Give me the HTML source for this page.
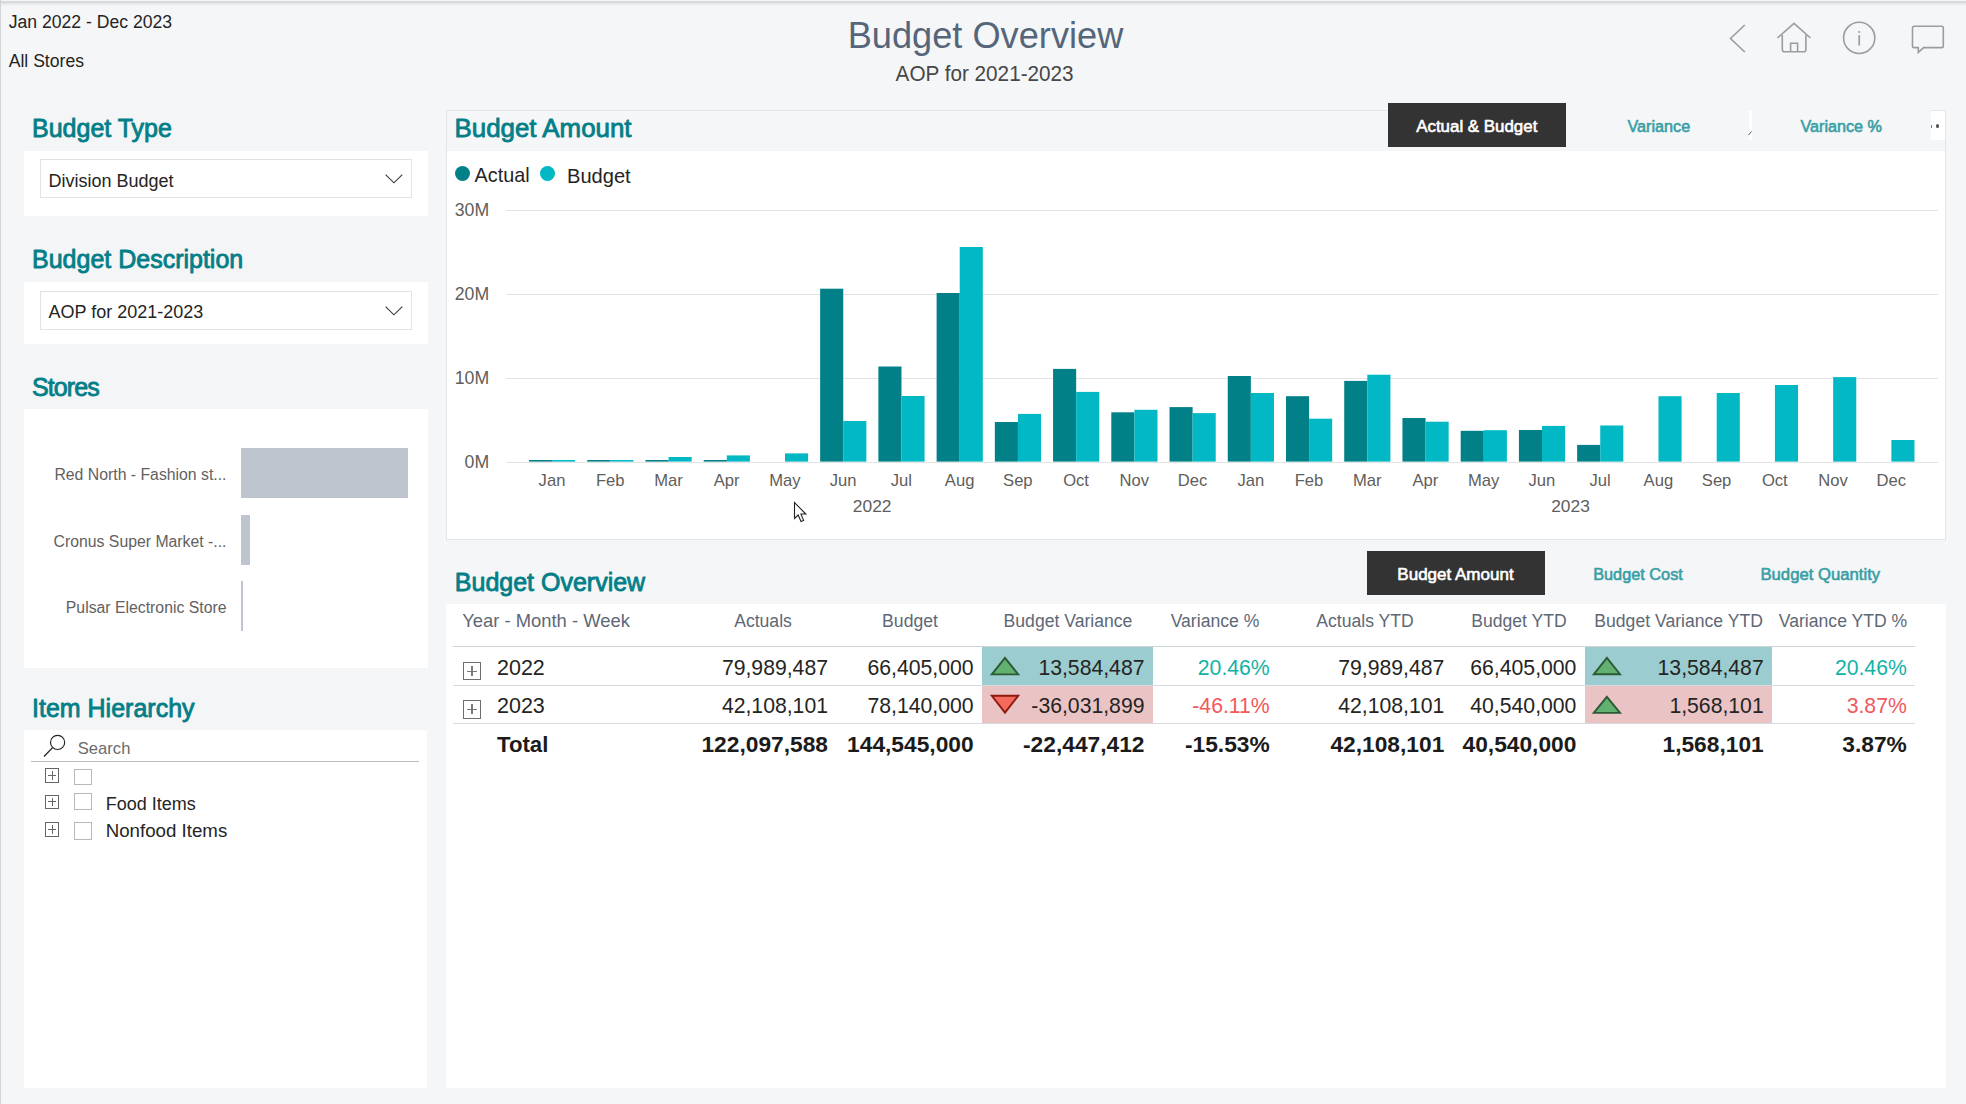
<!DOCTYPE html><html><head><meta charset="utf-8"><style>
html,body{margin:0;padding:0;width:1966px;height:1104px;overflow:hidden;background:#F5F6F8;font-family:"Liberation Sans", sans-serif;}
body{position:relative;}
svg text{font-family:"Liberation Sans", sans-serif;}
</style></head><body>
<div style="position:absolute;left:0;top:0;width:1966px;height:7px;background:linear-gradient(#F8F8F9 0px,#F3F3F4 1px,#D3D4D6 1.6px,#DFE0E2 3px,#ECEDEF 4.5px,#F5F6F8 6.5px);"></div>
<div style="position:absolute;left:0.00px;top:0.00px;width:1.20px;height:1104.00px;background:#D2D4D6;"></div>
<svg style="position:absolute;left:0;top:0;overflow:visible" width="1" height="1"><text x="8.70" y="27.90" font-size="17.6" font-weight="400" fill="#252423" text-anchor="start" style="white-space:pre">Jan 2022 - Dec 2023</text></svg>
<svg style="position:absolute;left:0;top:0;overflow:visible" width="1" height="1"><text x="8.70" y="66.80" font-size="17.6" font-weight="400" fill="#252423" text-anchor="start" style="white-space:pre">All Stores</text></svg>
<svg style="position:absolute;left:0;top:0;overflow:visible" width="1" height="1"><text x="985.50" y="48.00" font-size="37.6" font-weight="400" fill="#55657A" text-anchor="middle" textLength="275.66" lengthAdjust="spacingAndGlyphs" style="white-space:pre">Budget Overview</text></svg>
<svg style="position:absolute;left:0;top:0;overflow:visible" width="1" height="1"><text x="984.60" y="80.80" font-size="22" font-weight="400" fill="#474747" text-anchor="middle" textLength="178.00" lengthAdjust="spacingAndGlyphs" style="white-space:pre">AOP for 2021-2023</text></svg>
<svg style="position:absolute;left:0;top:0" width="1966" height="110" viewBox="0 0 1966 110">
<g fill="none" stroke="#9A9DA0" stroke-width="1.6" stroke-linecap="butt" stroke-linejoin="miter">
<polyline points="1744.8,25 1730.5,38.5 1744.8,52"/>
<polyline points="1777.5,38 1794,23.3 1810.5,38"/>
<path d="M1782.3,35 V49.5 Q1782.3,51.8 1784.6,51.8 H1803.6 Q1805.9,51.8 1805.9,49.5 V35"/>
<polyline points="1790.6,51.8 1790.6,43.2 1797.6,43.2 1797.6,51.8"/>
<circle cx="1859.2" cy="37.9" r="15.6"/>
<line x1="1859.2" y1="35.2" x2="1859.2" y2="45.6" stroke-width="1.7"/>
<path d="M1914.2,26.2 H1941.6 Q1943.3,26.2 1943.3,27.9 V45.9 Q1943.3,47.6 1941.6,47.6 H1923.6 L1918.3,52.4 L1918.3,47.6 H1914.2 Q1912.5,47.6 1912.5,45.9 V27.9 Q1912.5,26.2 1914.2,26.2 Z"/>
</g>
<circle cx="1859.2" cy="32" r="1.1" fill="#9A9DA0"/>
</svg>
<div style="position:absolute;left:23.50px;top:109.00px;width:403.50px;height:41.50px;background:#F4F5F7;"></div>
<div style="position:absolute;left:23.50px;top:150.50px;width:404.50px;height:65.00px;background:#FFFFFF;"></div>
<svg style="position:absolute;left:0;top:0;overflow:visible" width="1" height="1"><text x="32.00" y="137.10" font-size="25" font-weight="400" fill="#047F88" text-anchor="start" stroke="#047F88" stroke-width="0.85" stroke-linejoin="round" style="white-space:pre">Budget Type</text></svg>
<div style="position:absolute;left:39.50px;top:158.60px;width:372.50px;height:39.70px;background:#FFFFFF;box-sizing:border-box;border:1px solid #E3E3E3;"></div>
<svg style="position:absolute;left:0;top:0;overflow:visible" width="1" height="1"><text x="48.50" y="187.20" font-size="18" font-weight="400" fill="#252423" text-anchor="start" style="white-space:pre">Division Budget</text></svg>
<svg style="position:absolute;left:383px;top:171.4px" width="22" height="14" viewBox="0 0 22 14"><polyline points="2.6,3.6 10.9,11.8 19.3,3.6" fill="none" stroke="#3A3A3A" stroke-width="1.15"/></svg>
<div style="position:absolute;left:23.50px;top:241.70px;width:403.50px;height:40.10px;background:#F4F5F7;"></div>
<div style="position:absolute;left:23.50px;top:281.80px;width:404.50px;height:61.80px;background:#FFFFFF;"></div>
<svg style="position:absolute;left:0;top:0;overflow:visible" width="1" height="1"><text x="32.00" y="268.00" font-size="25" font-weight="400" fill="#047F88" text-anchor="start" stroke="#047F88" stroke-width="0.85" stroke-linejoin="round" style="white-space:pre">Budget Description</text></svg>
<div style="position:absolute;left:39.50px;top:290.50px;width:372.50px;height:39.50px;background:#FFFFFF;box-sizing:border-box;border:1px solid #E3E3E3;"></div>
<svg style="position:absolute;left:0;top:0;overflow:visible" width="1" height="1"><text x="48.50" y="318.00" font-size="18" font-weight="400" fill="#252423" text-anchor="start" style="white-space:pre">AOP for 2021-2023</text></svg>
<svg style="position:absolute;left:383px;top:303.2px" width="22" height="14" viewBox="0 0 22 14"><polyline points="2.6,3.6 10.9,11.8 19.3,3.6" fill="none" stroke="#3A3A3A" stroke-width="1.15"/></svg>
<div style="position:absolute;left:23.50px;top:368.70px;width:403.50px;height:40.30px;background:#F4F5F7;"></div>
<div style="position:absolute;left:23.50px;top:409.00px;width:404.50px;height:259.00px;background:#FFFFFF;"></div>
<svg style="position:absolute;left:0;top:0;overflow:visible" width="1" height="1"><text x="32.00" y="395.70" font-size="25" font-weight="400" fill="#047F88" text-anchor="start" stroke="#047F88" stroke-width="0.85" stroke-linejoin="round" style="white-space:pre"><tspan letter-spacing="-0.9">Stores</tspan></text></svg>
<svg style="position:absolute;left:0;top:0;overflow:visible" width="1" height="1"><text x="226.50" y="479.90" font-size="15.8" font-weight="400" fill="#63615F" text-anchor="end" style="white-space:pre">Red North - Fashion st...</text></svg>
<svg style="position:absolute;left:0;top:0;overflow:visible" width="1" height="1"><text x="226.50" y="546.70" font-size="15.8" font-weight="400" fill="#63615F" text-anchor="end" style="white-space:pre">Cronus Super Market -...</text></svg>
<svg style="position:absolute;left:0;top:0;overflow:visible" width="1" height="1"><text x="226.50" y="613.00" font-size="15.8" font-weight="400" fill="#63615F" text-anchor="end" style="white-space:pre">Pulsar Electronic Store</text></svg>
<div style="position:absolute;left:241.00px;top:447.80px;width:166.80px;height:50.40px;background:#BFC5CE;"></div>
<div style="position:absolute;left:241.00px;top:514.70px;width:8.90px;height:50.30px;background:#BFC5CE;"></div>
<div style="position:absolute;left:241.00px;top:581.00px;width:2.00px;height:50.40px;background:#BFC5CE;"></div>
<div style="position:absolute;left:23.50px;top:689.00px;width:402.00px;height:41.40px;background:#F4F5F7;"></div>
<div style="position:absolute;left:23.50px;top:730.40px;width:403.00px;height:357.60px;background:#FFFFFF;"></div>
<svg style="position:absolute;left:0;top:0;overflow:visible" width="1" height="1"><text x="32.00" y="716.70" font-size="25" font-weight="400" fill="#047F88" text-anchor="start" stroke="#047F88" stroke-width="0.85" stroke-linejoin="round" style="white-space:pre">Item Hierarchy</text></svg>
<svg style="position:absolute;left:40px;top:732px" width="30" height="30" viewBox="0 0 30 30">
<circle cx="17.6" cy="10.4" r="7.1" fill="none" stroke="#222" stroke-width="1.15"/>
<line x1="12.6" y1="15.6" x2="4" y2="24.5" stroke="#222" stroke-width="1.3"/></svg>
<svg style="position:absolute;left:0;top:0;overflow:visible" width="1" height="1"><text x="77.80" y="753.70" font-size="16.6" font-weight="400" fill="#6B6B6B" text-anchor="start" style="white-space:pre">Search</text></svg>
<div style="position:absolute;left:31.00px;top:760.80px;width:387.80px;height:1.20px;background:#BDBDBD;"></div>
<div style="position:absolute;left:44.6px;top:768.0px;width:14.9px;height:15.0px;box-sizing:border-box;border:1.3px solid #666;"></div>
<div style="position:absolute;left:47.85px;top:775.00px;width:8.40px;height:1.00px;background:#666;"></div>
<div style="position:absolute;left:51.55px;top:771.30px;width:1.00px;height:8.40px;background:#666;"></div>
<div style="position:absolute;left:74.4px;top:768.6px;width:17.8px;height:16.7px;box-sizing:border-box;border:1.2px solid #B8B8B8;background:#fff;"></div>
<div style="position:absolute;left:44.6px;top:794.5px;width:14.9px;height:14.5px;box-sizing:border-box;border:1.3px solid #666;"></div>
<div style="position:absolute;left:47.85px;top:801.25px;width:8.40px;height:1.00px;background:#666;"></div>
<div style="position:absolute;left:51.55px;top:797.55px;width:1.00px;height:8.40px;background:#666;"></div>
<div style="position:absolute;left:74.4px;top:793.3px;width:17.8px;height:17.2px;box-sizing:border-box;border:1.2px solid #B8B8B8;background:#fff;"></div>
<svg style="position:absolute;left:0;top:0;overflow:visible" width="1" height="1"><text x="105.70" y="809.80" font-size="18" font-weight="400" fill="#252423" text-anchor="start" style="white-space:pre">Food Items</text></svg>
<div style="position:absolute;left:44.6px;top:822.4px;width:14.9px;height:14.4px;box-sizing:border-box;border:1.3px solid #666;"></div>
<div style="position:absolute;left:47.85px;top:829.10px;width:8.40px;height:1.00px;background:#666;"></div>
<div style="position:absolute;left:51.55px;top:825.40px;width:1.00px;height:8.40px;background:#666;"></div>
<div style="position:absolute;left:74.4px;top:822.0px;width:17.8px;height:18.0px;box-sizing:border-box;border:1.2px solid #B8B8B8;background:#fff;"></div>
<svg style="position:absolute;left:0;top:0;overflow:visible" width="1" height="1"><text x="105.70" y="836.80" font-size="18.7" font-weight="400" fill="#252423" text-anchor="start" style="white-space:pre">Nonfood Items</text></svg>
<div style="position:absolute;left:446px;top:110px;width:1500px;height:429.5px;box-sizing:border-box;border:1px solid #E4E5E7;background:#F5F6F8;"></div>
<div style="position:absolute;left:447.00px;top:150.50px;width:1498.00px;height:388.00px;background:#FFFFFF;"></div>
<svg style="position:absolute;left:0;top:0;overflow:visible" width="1" height="1"><text x="454.50" y="137.00" font-size="25.9" font-weight="400" fill="#047F88" text-anchor="start" stroke="#047F88" stroke-width="0.85" stroke-linejoin="round" style="white-space:pre">Budget Amount</text></svg>
<div style="position:absolute;left:1566.00px;top:103.00px;width:365.00px;height:45.00px;background:#F5F6F8;"></div>
<div style="position:absolute;left:1749.30px;top:110.90px;width:2.40px;height:28.70px;background:#FFFFFF;"></div>
<svg style="position:absolute;left:1747px;top:129px" width="6" height="8"><line x1="1.5" y1="6" x2="4.5" y2="2.5" stroke="#555" stroke-width="1"/></svg>
<div style="position:absolute;left:1387.60px;top:103.00px;width:178.40px;height:44.30px;background:#333333;"></div>
<svg style="position:absolute;left:0;top:0;overflow:visible" width="1" height="1"><text x="1476.80" y="132.40" font-size="16.9" font-weight="400" fill="#FFFFFF" text-anchor="middle" stroke="#FFFFFF" stroke-width="0.6" stroke-linejoin="round" style="white-space:pre">Actual &amp; Budget</text></svg>
<svg style="position:absolute;left:0;top:0;overflow:visible" width="1" height="1"><text x="1658.80" y="131.60" font-size="16.2" font-weight="400" fill="#3A9EA5" text-anchor="middle" stroke="#3A9EA5" stroke-width="0.6" stroke-linejoin="round" style="white-space:pre">Variance</text></svg>
<svg style="position:absolute;left:0;top:0;overflow:visible" width="1" height="1"><text x="1841.20" y="131.60" font-size="16.2" font-weight="400" fill="#3A9EA5" text-anchor="middle" stroke="#3A9EA5" stroke-width="0.6" stroke-linejoin="round" style="white-space:pre">Variance %</text></svg>
<div style="position:absolute;left:1931.00px;top:110.50px;width:14.00px;height:29.50px;background:#FFFFFF;"></div>
<div style="position:absolute;left:1931.00px;top:125.00px;width:1.00px;height:2.50px;background:#777;"></div>
<div style="position:absolute;left:1936.2px;top:124.4px;width:3.2px;height:3.2px;border-radius:50%;background:#555;"></div>
<div style="position:absolute;left:455px;top:165.7px;width:15px;height:15px;border-radius:50%;background:#018087;"></div>
<svg style="position:absolute;left:0;top:0;overflow:visible" width="1" height="1"><text x="474.60" y="181.90" font-size="19.8" font-weight="400" fill="#252423" text-anchor="start" style="white-space:pre">Actual</text></svg>
<div style="position:absolute;left:540px;top:165.7px;width:15px;height:15px;border-radius:50%;background:#01B8C4;"></div>
<svg style="position:absolute;left:0;top:0;overflow:visible" width="1" height="1"><text x="567.00" y="182.70" font-size="20.1" font-weight="400" fill="#252423" text-anchor="start" style="white-space:pre">Budget</text></svg>
<div style="position:absolute;left:505.50px;top:461.50px;width:1432.50px;height:1.20px;background:#E3E3E3;"></div>
<svg style="position:absolute;left:0;top:0;overflow:visible" width="1" height="1"><text x="489.20" y="468.00" font-size="17.7" font-weight="400" fill="#605E5C" text-anchor="end" style="white-space:pre">0M</text></svg>
<div style="position:absolute;left:505.50px;top:377.57px;width:1432.50px;height:1.20px;background:#E3E3E3;"></div>
<svg style="position:absolute;left:0;top:0;overflow:visible" width="1" height="1"><text x="489.20" y="384.07" font-size="17.7" font-weight="400" fill="#605E5C" text-anchor="end" style="white-space:pre">10M</text></svg>
<div style="position:absolute;left:505.50px;top:293.64px;width:1432.50px;height:1.20px;background:#E3E3E3;"></div>
<svg style="position:absolute;left:0;top:0;overflow:visible" width="1" height="1"><text x="489.20" y="300.14" font-size="17.7" font-weight="400" fill="#605E5C" text-anchor="end" style="white-space:pre">20M</text></svg>
<div style="position:absolute;left:505.50px;top:209.71px;width:1432.50px;height:1.20px;background:#E3E3E3;"></div>
<svg style="position:absolute;left:0;top:0;overflow:visible" width="1" height="1"><text x="489.20" y="216.21" font-size="17.7" font-weight="400" fill="#605E5C" text-anchor="end" style="white-space:pre">30M</text></svg>
<svg style="position:absolute;left:0;top:0;overflow:visible" width="1" height="1"><text x="552.00" y="485.70" font-size="16.6" font-weight="400" fill="#605E5C" text-anchor="middle" style="white-space:pre">Jan</text></svg>
<svg style="position:absolute;left:0;top:0;overflow:visible" width="1" height="1"><text x="610.23" y="485.70" font-size="16.6" font-weight="400" fill="#605E5C" text-anchor="middle" style="white-space:pre">Feb</text></svg>
<svg style="position:absolute;left:0;top:0;overflow:visible" width="1" height="1"><text x="668.46" y="485.70" font-size="16.6" font-weight="400" fill="#605E5C" text-anchor="middle" style="white-space:pre">Mar</text></svg>
<svg style="position:absolute;left:0;top:0;overflow:visible" width="1" height="1"><text x="726.69" y="485.70" font-size="16.6" font-weight="400" fill="#605E5C" text-anchor="middle" style="white-space:pre">Apr</text></svg>
<svg style="position:absolute;left:0;top:0;overflow:visible" width="1" height="1"><text x="784.92" y="485.70" font-size="16.6" font-weight="400" fill="#605E5C" text-anchor="middle" style="white-space:pre">May</text></svg>
<svg style="position:absolute;left:0;top:0;overflow:visible" width="1" height="1"><text x="843.15" y="485.70" font-size="16.6" font-weight="400" fill="#605E5C" text-anchor="middle" style="white-space:pre">Jun</text></svg>
<svg style="position:absolute;left:0;top:0;overflow:visible" width="1" height="1"><text x="901.38" y="485.70" font-size="16.6" font-weight="400" fill="#605E5C" text-anchor="middle" style="white-space:pre">Jul</text></svg>
<svg style="position:absolute;left:0;top:0;overflow:visible" width="1" height="1"><text x="959.61" y="485.70" font-size="16.6" font-weight="400" fill="#605E5C" text-anchor="middle" style="white-space:pre">Aug</text></svg>
<svg style="position:absolute;left:0;top:0;overflow:visible" width="1" height="1"><text x="1017.84" y="485.70" font-size="16.6" font-weight="400" fill="#605E5C" text-anchor="middle" style="white-space:pre">Sep</text></svg>
<svg style="position:absolute;left:0;top:0;overflow:visible" width="1" height="1"><text x="1076.07" y="485.70" font-size="16.6" font-weight="400" fill="#605E5C" text-anchor="middle" style="white-space:pre">Oct</text></svg>
<svg style="position:absolute;left:0;top:0;overflow:visible" width="1" height="1"><text x="1134.30" y="485.70" font-size="16.6" font-weight="400" fill="#605E5C" text-anchor="middle" style="white-space:pre">Nov</text></svg>
<svg style="position:absolute;left:0;top:0;overflow:visible" width="1" height="1"><text x="1192.53" y="485.70" font-size="16.6" font-weight="400" fill="#605E5C" text-anchor="middle" style="white-space:pre">Dec</text></svg>
<svg style="position:absolute;left:0;top:0;overflow:visible" width="1" height="1"><text x="1250.76" y="485.70" font-size="16.6" font-weight="400" fill="#605E5C" text-anchor="middle" style="white-space:pre">Jan</text></svg>
<svg style="position:absolute;left:0;top:0;overflow:visible" width="1" height="1"><text x="1308.99" y="485.70" font-size="16.6" font-weight="400" fill="#605E5C" text-anchor="middle" style="white-space:pre">Feb</text></svg>
<svg style="position:absolute;left:0;top:0;overflow:visible" width="1" height="1"><text x="1367.22" y="485.70" font-size="16.6" font-weight="400" fill="#605E5C" text-anchor="middle" style="white-space:pre">Mar</text></svg>
<svg style="position:absolute;left:0;top:0;overflow:visible" width="1" height="1"><text x="1425.45" y="485.70" font-size="16.6" font-weight="400" fill="#605E5C" text-anchor="middle" style="white-space:pre">Apr</text></svg>
<svg style="position:absolute;left:0;top:0;overflow:visible" width="1" height="1"><text x="1483.68" y="485.70" font-size="16.6" font-weight="400" fill="#605E5C" text-anchor="middle" style="white-space:pre">May</text></svg>
<svg style="position:absolute;left:0;top:0;overflow:visible" width="1" height="1"><text x="1541.91" y="485.70" font-size="16.6" font-weight="400" fill="#605E5C" text-anchor="middle" style="white-space:pre">Jun</text></svg>
<svg style="position:absolute;left:0;top:0;overflow:visible" width="1" height="1"><text x="1600.14" y="485.70" font-size="16.6" font-weight="400" fill="#605E5C" text-anchor="middle" style="white-space:pre">Jul</text></svg>
<svg style="position:absolute;left:0;top:0;overflow:visible" width="1" height="1"><text x="1658.37" y="485.70" font-size="16.6" font-weight="400" fill="#605E5C" text-anchor="middle" style="white-space:pre">Aug</text></svg>
<svg style="position:absolute;left:0;top:0;overflow:visible" width="1" height="1"><text x="1716.60" y="485.70" font-size="16.6" font-weight="400" fill="#605E5C" text-anchor="middle" style="white-space:pre">Sep</text></svg>
<svg style="position:absolute;left:0;top:0;overflow:visible" width="1" height="1"><text x="1774.83" y="485.70" font-size="16.6" font-weight="400" fill="#605E5C" text-anchor="middle" style="white-space:pre">Oct</text></svg>
<svg style="position:absolute;left:0;top:0;overflow:visible" width="1" height="1"><text x="1833.06" y="485.70" font-size="16.6" font-weight="400" fill="#605E5C" text-anchor="middle" style="white-space:pre">Nov</text></svg>
<svg style="position:absolute;left:0;top:0;overflow:visible" width="1" height="1"><text x="1891.29" y="485.70" font-size="16.6" font-weight="400" fill="#605E5C" text-anchor="middle" style="white-space:pre">Dec</text></svg>
<svg style="position:absolute;left:0;top:0" width="1966" height="540" viewBox="0 0 1966 540"><rect x="529.00" y="460.00" width="23.1" height="1.60" fill="#018087"/><rect x="552.10" y="460.00" width="23.1" height="1.60" fill="#01B8C4"/><rect x="587.23" y="460.00" width="23.1" height="1.60" fill="#018087"/><rect x="610.33" y="460.00" width="23.1" height="1.60" fill="#01B8C4"/><rect x="645.46" y="460.00" width="23.1" height="1.60" fill="#018087"/><rect x="668.56" y="457.00" width="23.1" height="4.60" fill="#01B8C4"/><rect x="703.69" y="460.00" width="23.1" height="1.60" fill="#018087"/><rect x="726.79" y="455.40" width="23.1" height="6.20" fill="#01B8C4"/><rect x="785.02" y="453.40" width="23.1" height="8.20" fill="#01B8C4"/><rect x="820.15" y="288.70" width="23.1" height="172.90" fill="#018087"/><rect x="843.25" y="421.00" width="23.1" height="40.60" fill="#01B8C4"/><rect x="878.38" y="366.50" width="23.1" height="95.10" fill="#018087"/><rect x="901.48" y="396.00" width="23.1" height="65.60" fill="#01B8C4"/><rect x="936.61" y="293.00" width="23.1" height="168.60" fill="#018087"/><rect x="959.71" y="247.00" width="23.1" height="214.60" fill="#01B8C4"/><rect x="994.84" y="422.00" width="23.1" height="39.60" fill="#018087"/><rect x="1017.94" y="413.90" width="23.1" height="47.70" fill="#01B8C4"/><rect x="1053.07" y="368.90" width="23.1" height="92.70" fill="#018087"/><rect x="1076.17" y="391.90" width="23.1" height="69.70" fill="#01B8C4"/><rect x="1111.30" y="412.30" width="23.1" height="49.30" fill="#018087"/><rect x="1134.40" y="409.80" width="23.1" height="51.80" fill="#01B8C4"/><rect x="1169.53" y="407.10" width="23.1" height="54.50" fill="#018087"/><rect x="1192.63" y="413.10" width="23.1" height="48.50" fill="#01B8C4"/><rect x="1227.76" y="376.00" width="23.1" height="85.60" fill="#018087"/><rect x="1250.86" y="393.00" width="23.1" height="68.60" fill="#01B8C4"/><rect x="1285.99" y="396.20" width="23.1" height="65.40" fill="#018087"/><rect x="1309.09" y="418.70" width="23.1" height="42.90" fill="#01B8C4"/><rect x="1344.22" y="380.90" width="23.1" height="80.70" fill="#018087"/><rect x="1367.32" y="374.70" width="23.1" height="86.90" fill="#01B8C4"/><rect x="1402.45" y="418.00" width="23.1" height="43.60" fill="#018087"/><rect x="1425.55" y="421.70" width="23.1" height="39.90" fill="#01B8C4"/><rect x="1460.68" y="430.80" width="23.1" height="30.80" fill="#018087"/><rect x="1483.78" y="430.20" width="23.1" height="31.40" fill="#01B8C4"/><rect x="1518.91" y="430.00" width="23.1" height="31.60" fill="#018087"/><rect x="1542.01" y="425.90" width="23.1" height="35.70" fill="#01B8C4"/><rect x="1577.14" y="444.90" width="23.1" height="16.70" fill="#018087"/><rect x="1600.24" y="425.50" width="23.1" height="36.10" fill="#01B8C4"/><rect x="1658.47" y="396.20" width="23.1" height="65.40" fill="#01B8C4"/><rect x="1716.70" y="393.00" width="23.1" height="68.60" fill="#01B8C4"/><rect x="1774.93" y="385.00" width="23.1" height="76.60" fill="#01B8C4"/><rect x="1833.16" y="377.10" width="23.1" height="84.50" fill="#01B8C4"/><rect x="1891.39" y="440.00" width="23.1" height="21.60" fill="#01B8C4"/></svg>
<svg style="position:absolute;left:0;top:0;overflow:visible" width="1" height="1"><text x="872.20" y="512.20" font-size="17.4" font-weight="400" fill="#605E5C" text-anchor="middle" style="white-space:pre">2022</text></svg>
<svg style="position:absolute;left:0;top:0;overflow:visible" width="1" height="1"><text x="1570.50" y="512.20" font-size="17.4" font-weight="400" fill="#605E5C" text-anchor="middle" style="white-space:pre">2023</text></svg>
<svg style="position:absolute;left:792.5px;top:500.8px" width="16" height="24" viewBox="0 0 16 24">
<path d="M1.5,1.5 L1.5,17.5 L5.2,14 L8,20.5 L10.6,19.4 L7.9,13 L12.8,13 Z" fill="#fff" stroke="#222" stroke-width="1.1" stroke-linejoin="miter"/></svg>
<div style="position:absolute;left:446.00px;top:604.20px;width:1500.30px;height:483.80px;background:#FFFFFF;"></div>
<svg style="position:absolute;left:0;top:0;overflow:visible" width="1" height="1"><text x="454.80" y="591.30" font-size="25" font-weight="400" fill="#047F88" text-anchor="start" stroke="#047F88" stroke-width="0.85" stroke-linejoin="round" style="white-space:pre">Budget Overview</text></svg>
<div style="position:absolute;left:1366.80px;top:551.10px;width:178.10px;height:43.70px;background:#333333;"></div>
<svg style="position:absolute;left:0;top:0;overflow:visible" width="1" height="1"><text x="1455.50" y="579.70" font-size="17.0" font-weight="400" fill="#FFFFFF" text-anchor="middle" stroke="#FFFFFF" stroke-width="0.6" stroke-linejoin="round" style="white-space:pre">Budget Amount</text></svg>
<svg style="position:absolute;left:0;top:0;overflow:visible" width="1" height="1"><text x="1638.00" y="579.70" font-size="16.3" font-weight="400" fill="#3A9EA5" text-anchor="middle" stroke="#3A9EA5" stroke-width="0.6" stroke-linejoin="round" style="white-space:pre">Budget Cost</text></svg>
<svg style="position:absolute;left:0;top:0;overflow:visible" width="1" height="1"><text x="1820.30" y="579.70" font-size="16.7" font-weight="400" fill="#3A9EA5" text-anchor="middle" stroke="#3A9EA5" stroke-width="0.6" stroke-linejoin="round" style="white-space:pre">Budget Quantity</text></svg>
<svg style="position:absolute;left:0;top:0;overflow:visible" width="1" height="1"><text x="462.20" y="626.90" font-size="18.4" font-weight="400" fill="#5E6876" text-anchor="start" style="white-space:pre">Year - Month - Week</text></svg>
<svg style="position:absolute;left:0;top:0;overflow:visible" width="1" height="1"><text x="763.00" y="626.90" font-size="17.6" font-weight="400" fill="#5E6876" text-anchor="middle" style="white-space:pre">Actuals</text></svg>
<svg style="position:absolute;left:0;top:0;overflow:visible" width="1" height="1"><text x="910.00" y="626.90" font-size="17.6" font-weight="400" fill="#5E6876" text-anchor="middle" style="white-space:pre">Budget</text></svg>
<svg style="position:absolute;left:0;top:0;overflow:visible" width="1" height="1"><text x="1068.00" y="626.90" font-size="17.6" font-weight="400" fill="#5E6876" text-anchor="middle" style="white-space:pre">Budget Variance</text></svg>
<svg style="position:absolute;left:0;top:0;overflow:visible" width="1" height="1"><text x="1215.00" y="626.90" font-size="17.6" font-weight="400" fill="#5E6876" text-anchor="middle" style="white-space:pre">Variance %</text></svg>
<svg style="position:absolute;left:0;top:0;overflow:visible" width="1" height="1"><text x="1365.00" y="626.90" font-size="17.6" font-weight="400" fill="#5E6876" text-anchor="middle" style="white-space:pre">Actuals YTD</text></svg>
<svg style="position:absolute;left:0;top:0;overflow:visible" width="1" height="1"><text x="1519.00" y="626.90" font-size="17.6" font-weight="400" fill="#5E6876" text-anchor="middle" style="white-space:pre">Budget YTD</text></svg>
<svg style="position:absolute;left:0;top:0;overflow:visible" width="1" height="1"><text x="1678.60" y="626.90" font-size="17.6" font-weight="400" fill="#5E6876" text-anchor="middle" style="white-space:pre">Budget Variance YTD</text></svg>
<svg style="position:absolute;left:0;top:0;overflow:visible" width="1" height="1"><text x="1843.00" y="626.90" font-size="17.6" font-weight="400" fill="#5E6876" text-anchor="middle" style="white-space:pre">Variance YTD %</text></svg>
<div style="position:absolute;left:453.40px;top:645.50px;width:1461.60px;height:1.50px;background:#CFD3D8;"></div>
<div style="position:absolute;left:453.40px;top:684.70px;width:1461.60px;height:1.30px;background:#D6D9DD;"></div>
<div style="position:absolute;left:453.40px;top:723.20px;width:1461.60px;height:1.30px;background:#D6D9DD;"></div>
<div style="position:absolute;left:982.00px;top:647.00px;width:170.70px;height:37.70px;background:#9BCCD0;"></div>
<div style="position:absolute;left:982.00px;top:686.00px;width:170.70px;height:37.20px;background:#EAC3C5;"></div>
<div style="position:absolute;left:1585.30px;top:647.00px;width:186.40px;height:37.70px;background:#9BCCD0;"></div>
<div style="position:absolute;left:1585.30px;top:686.00px;width:186.40px;height:37.20px;background:#EAC3C5;"></div>
<svg style="position:absolute;left:989.0px;top:655.2px" width="32.0" height="22.2"><polygon points="16.00,2.8 29.20,19.40 2.8,19.40" fill="#62B072" stroke="#2C5A34" stroke-width="1.9" stroke-linejoin="miter"/></svg>
<svg style="position:absolute;left:989.0px;top:692.8px" width="32.0" height="22.5"><polygon points="2.8,2.8 29.20,2.8 16.00,19.70" fill="#F46B5D" stroke="#8E1A12" stroke-width="1.9" stroke-linejoin="miter"/></svg>
<svg style="position:absolute;left:1591.3px;top:655.0px" width="31.8" height="22.0"><polygon points="15.90,2.8 29.00,19.20 2.8,19.20" fill="#62B072" stroke="#2C5A34" stroke-width="1.9" stroke-linejoin="miter"/></svg>
<svg style="position:absolute;left:1591.3px;top:693.7px" width="31.8" height="21.7"><polygon points="15.90,2.8 29.00,18.90 2.8,18.90" fill="#62B072" stroke="#2C5A34" stroke-width="1.9" stroke-linejoin="miter"/></svg>
<div style="position:absolute;left:462.8px;top:661.9px;width:18.5px;height:18.5px;box-sizing:border-box;border:1.3px solid #6E6E6E;"></div>
<div style="position:absolute;left:467.05px;top:670.50px;width:10.00px;height:1.30px;background:#7A7A7A;"></div>
<div style="position:absolute;left:471.40px;top:666.15px;width:1.30px;height:10.00px;background:#7A7A7A;"></div>
<div style="position:absolute;left:462.8px;top:700.2px;width:18.5px;height:18.5px;box-sizing:border-box;border:1.3px solid #6E6E6E;"></div>
<div style="position:absolute;left:467.05px;top:708.80px;width:10.00px;height:1.30px;background:#7A7A7A;"></div>
<div style="position:absolute;left:471.40px;top:704.45px;width:1.30px;height:10.00px;background:#7A7A7A;"></div>
<svg style="position:absolute;left:0;top:0;overflow:visible" width="1" height="1"><text x="497.00" y="674.50" font-size="22.4" font-weight="400" fill="#252423" text-anchor="start" textLength="47.83" lengthAdjust="spacingAndGlyphs" style="white-space:pre">2022</text></svg>
<svg style="position:absolute;left:0;top:0;overflow:visible" width="1" height="1"><text x="497.00" y="712.70" font-size="22.4" font-weight="400" fill="#252423" text-anchor="start" textLength="47.83" lengthAdjust="spacingAndGlyphs" style="white-space:pre">2023</text></svg>
<svg style="position:absolute;left:0;top:0;overflow:visible" width="1" height="1"><text x="497.00" y="751.70" font-size="22.2" font-weight="700" fill="#1B1B1B" text-anchor="start" style="white-space:pre">Total</text></svg>
<svg style="position:absolute;left:0;top:0;overflow:visible" width="1" height="1"><text x="828.00" y="674.50" font-size="22.1" font-weight="400" fill="#252423" text-anchor="end" textLength="106.11" lengthAdjust="spacingAndGlyphs" style="white-space:pre">79,989,487</text></svg>
<svg style="position:absolute;left:0;top:0;overflow:visible" width="1" height="1"><text x="828.00" y="712.70" font-size="22.1" font-weight="400" fill="#252423" text-anchor="end" textLength="106.11" lengthAdjust="spacingAndGlyphs" style="white-space:pre">42,108,101</text></svg>
<svg style="position:absolute;left:0;top:0;overflow:visible" width="1" height="1"><text x="828.00" y="751.70" font-size="21.7" font-weight="700" fill="#1B1B1B" text-anchor="end" textLength="126.52" lengthAdjust="spacingAndGlyphs" style="white-space:pre">122,097,588</text></svg>
<svg style="position:absolute;left:0;top:0;overflow:visible" width="1" height="1"><text x="973.60" y="674.50" font-size="22.1" font-weight="400" fill="#252423" text-anchor="end" textLength="106.11" lengthAdjust="spacingAndGlyphs" style="white-space:pre">66,405,000</text></svg>
<svg style="position:absolute;left:0;top:0;overflow:visible" width="1" height="1"><text x="973.60" y="712.70" font-size="22.1" font-weight="400" fill="#252423" text-anchor="end" textLength="106.11" lengthAdjust="spacingAndGlyphs" style="white-space:pre">78,140,000</text></svg>
<svg style="position:absolute;left:0;top:0;overflow:visible" width="1" height="1"><text x="973.60" y="751.70" font-size="21.7" font-weight="700" fill="#1B1B1B" text-anchor="end" textLength="126.52" lengthAdjust="spacingAndGlyphs" style="white-space:pre">144,545,000</text></svg>
<svg style="position:absolute;left:0;top:0;overflow:visible" width="1" height="1"><text x="1144.50" y="674.50" font-size="22.1" font-weight="400" fill="#252423" text-anchor="end" textLength="106.11" lengthAdjust="spacingAndGlyphs" style="white-space:pre">13,584,487</text></svg>
<svg style="position:absolute;left:0;top:0;overflow:visible" width="1" height="1"><text x="1144.50" y="712.70" font-size="22.1" font-weight="400" fill="#252423" text-anchor="end" textLength="113.17" lengthAdjust="spacingAndGlyphs" style="white-space:pre">-36,031,899</text></svg>
<svg style="position:absolute;left:0;top:0;overflow:visible" width="1" height="1"><text x="1144.50" y="751.70" font-size="21.7" font-weight="700" fill="#1B1B1B" text-anchor="end" textLength="121.44" lengthAdjust="spacingAndGlyphs" style="white-space:pre">-22,447,412</text></svg>
<svg style="position:absolute;left:0;top:0;overflow:visible" width="1" height="1"><text x="1269.70" y="674.50" font-size="22.1" font-weight="400" fill="#12B3A5" text-anchor="end" textLength="71.90" lengthAdjust="spacingAndGlyphs" style="white-space:pre">20.46%</text></svg>
<svg style="position:absolute;left:0;top:0;overflow:visible" width="1" height="1"><text x="1269.70" y="712.70" font-size="22.1" font-weight="400" fill="#F2585C" text-anchor="end" textLength="77.39" lengthAdjust="spacingAndGlyphs" style="white-space:pre">-46.11%</text></svg>
<svg style="position:absolute;left:0;top:0;overflow:visible" width="1" height="1"><text x="1269.70" y="751.70" font-size="21.7" font-weight="700" fill="#1B1B1B" text-anchor="end" textLength="84.74" lengthAdjust="spacingAndGlyphs" style="white-space:pre">-15.53%</text></svg>
<svg style="position:absolute;left:0;top:0;overflow:visible" width="1" height="1"><text x="1444.30" y="674.50" font-size="22.1" font-weight="400" fill="#252423" text-anchor="end" textLength="106.11" lengthAdjust="spacingAndGlyphs" style="white-space:pre">79,989,487</text></svg>
<svg style="position:absolute;left:0;top:0;overflow:visible" width="1" height="1"><text x="1444.30" y="712.70" font-size="22.1" font-weight="400" fill="#252423" text-anchor="end" textLength="106.11" lengthAdjust="spacingAndGlyphs" style="white-space:pre">42,108,101</text></svg>
<svg style="position:absolute;left:0;top:0;overflow:visible" width="1" height="1"><text x="1444.30" y="751.70" font-size="21.7" font-weight="700" fill="#1B1B1B" text-anchor="end" textLength="113.86" lengthAdjust="spacingAndGlyphs" style="white-space:pre">42,108,101</text></svg>
<svg style="position:absolute;left:0;top:0;overflow:visible" width="1" height="1"><text x="1576.40" y="674.50" font-size="22.1" font-weight="400" fill="#252423" text-anchor="end" textLength="106.11" lengthAdjust="spacingAndGlyphs" style="white-space:pre">66,405,000</text></svg>
<svg style="position:absolute;left:0;top:0;overflow:visible" width="1" height="1"><text x="1576.40" y="712.70" font-size="22.1" font-weight="400" fill="#252423" text-anchor="end" textLength="106.11" lengthAdjust="spacingAndGlyphs" style="white-space:pre">40,540,000</text></svg>
<svg style="position:absolute;left:0;top:0;overflow:visible" width="1" height="1"><text x="1576.40" y="751.70" font-size="21.7" font-weight="700" fill="#1B1B1B" text-anchor="end" textLength="113.86" lengthAdjust="spacingAndGlyphs" style="white-space:pre">40,540,000</text></svg>
<svg style="position:absolute;left:0;top:0;overflow:visible" width="1" height="1"><text x="1763.70" y="674.50" font-size="22.1" font-weight="400" fill="#252423" text-anchor="end" textLength="106.11" lengthAdjust="spacingAndGlyphs" style="white-space:pre">13,584,487</text></svg>
<svg style="position:absolute;left:0;top:0;overflow:visible" width="1" height="1"><text x="1763.70" y="712.70" font-size="22.1" font-weight="400" fill="#252423" text-anchor="end" textLength="94.32" lengthAdjust="spacingAndGlyphs" style="white-space:pre">1,568,101</text></svg>
<svg style="position:absolute;left:0;top:0;overflow:visible" width="1" height="1"><text x="1763.70" y="751.70" font-size="21.7" font-weight="700" fill="#1B1B1B" text-anchor="end" textLength="101.21" lengthAdjust="spacingAndGlyphs" style="white-space:pre">1,568,101</text></svg>
<svg style="position:absolute;left:0;top:0;overflow:visible" width="1" height="1"><text x="1906.80" y="674.50" font-size="22.1" font-weight="400" fill="#12B3A5" text-anchor="end" textLength="71.90" lengthAdjust="spacingAndGlyphs" style="white-space:pre">20.46%</text></svg>
<svg style="position:absolute;left:0;top:0;overflow:visible" width="1" height="1"><text x="1906.80" y="712.70" font-size="22.1" font-weight="400" fill="#F2585C" text-anchor="end" textLength="60.11" lengthAdjust="spacingAndGlyphs" style="white-space:pre">3.87%</text></svg>
<svg style="position:absolute;left:0;top:0;overflow:visible" width="1" height="1"><text x="1906.80" y="751.70" font-size="21.7" font-weight="700" fill="#1B1B1B" text-anchor="end" textLength="64.51" lengthAdjust="spacingAndGlyphs" style="white-space:pre">3.87%</text></svg>
</body></html>
